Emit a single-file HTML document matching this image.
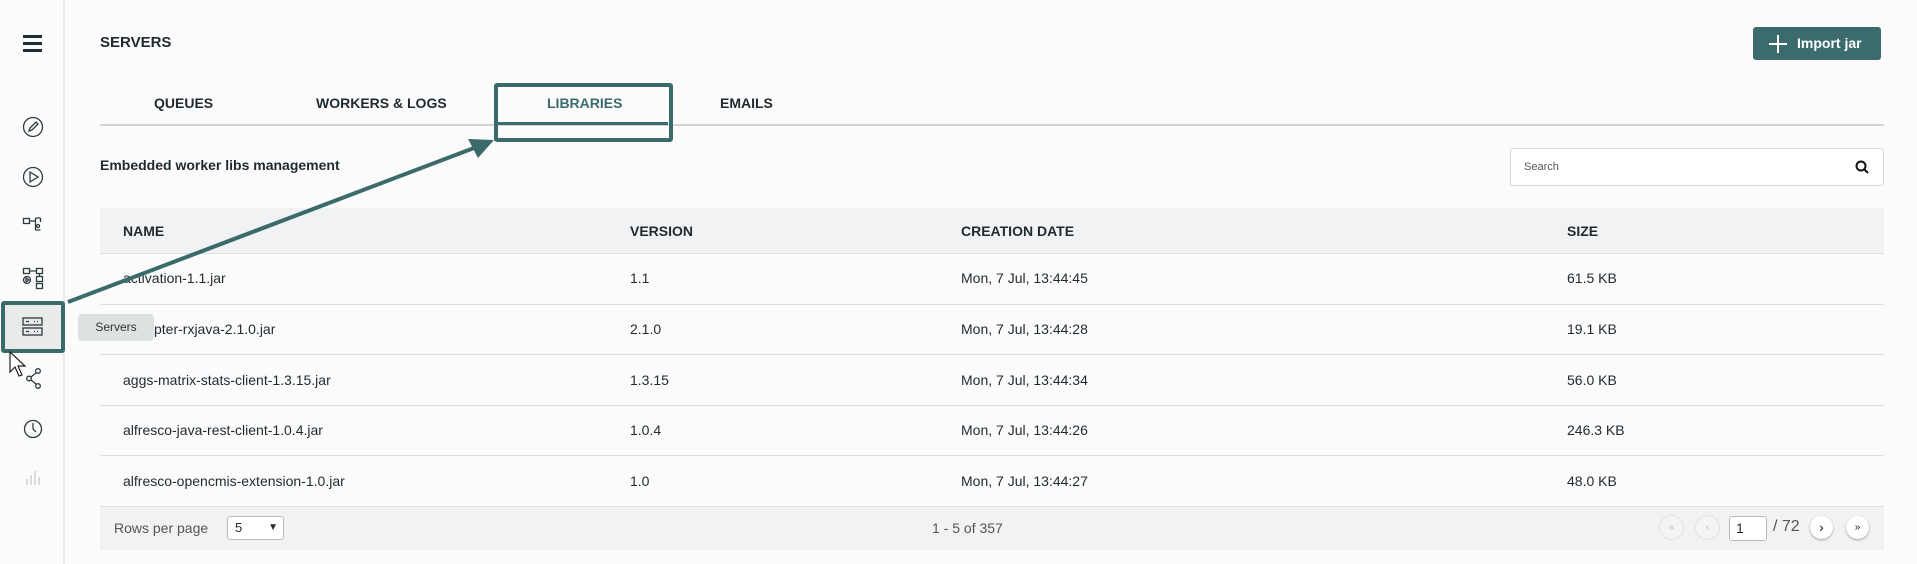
<!DOCTYPE html>
<html><head><meta charset="utf-8"><style>
*{margin:0;padding:0;box-sizing:border-box}
body{width:1917px;height:564px;background:#fcfbfb;font-family:"Liberation Sans",sans-serif;color:#1f2a30;position:relative;overflow:hidden}
.abs{position:absolute}
.side{left:0;top:0;width:65px;height:564px;border-right:2px solid #e9e9ea;background:#fcfbfb}
.t{position:absolute;white-space:nowrap}
.hdr{font-size:14px;font-weight:bold;color:#1f2a30}
.cell{font-size:14px;color:#1f2a30}
.row{position:absolute;left:100px;width:1784px;border-bottom:1px solid #dcdfe1}
.pb{position:absolute;top:516px;width:23px;height:23px;border-radius:50%;background:#fff;box-shadow:0 1px 2px rgba(0,0,0,.35);font-size:10px;text-align:center;line-height:23px;color:#222}
.pb.dis{background:#f3f4f5;color:#bbb;box-shadow:0 0 0 1px #e3e3e3}
</style></head><body>
<div class="abs side"></div>
<div class="abs" style="left:23px;top:35px;width:19px;height:3px;background:#1f3038"></div>
<div class="abs" style="left:23px;top:42px;width:19px;height:3px;background:#1f3038"></div>
<div class="abs" style="left:23px;top:49px;width:19px;height:3px;background:#1f3038"></div>
<svg class="abs" style="left:0;top:0" width="66" height="564" fill="none" stroke="#2d3a40" stroke-width="1.3">
<circle cx="33" cy="127" r="9.5"/><path d="M29 131l1-3 6-6 2 2-6 6z"/>
<circle cx="33" cy="177" r="9.5"/><path d="M30 172v10l8-5z"/>
<rect x="23.5" y="218.5" width="6" height="5"/><path d="M29.5 221h6M35.5 218v12M35.5 230h5M40.5 218v4M35.5 218h5"/><circle cx="38" cy="226" r="1.5"/>
<rect x="23.5" y="268.5" width="6" height="5"/><rect x="36.5" y="268.5" width="6" height="5"/><path d="M29.5 271h7M39.5 273.5v3"/><rect x="36.5" y="276.5" width="6" height="5"/><circle cx="27" cy="280" r="3.5"/><path d="M26 278v4l3-2z"/><rect x="36.5" y="283.5" width="6" height="5"/>
<path d="M31 377l5-4M31 380l5 4"/><circle cx="29" cy="378.5" r="2.3"/><circle cx="38" cy="371" r="2.3"/><circle cx="38" cy="386" r="2.3"/>
<circle cx="33" cy="429" r="8.5"/><path d="M33 423v6l3 3"/>
<path d="M27 485v-6M31 485v-10M35 485v-14M39 485v-8" stroke="#c8cccf"/>
</svg>
<div class="abs" style="left:1px;top:301px;width:64px;height:52px;border:4px solid #3b6a6a;border-radius:3px;background:#e9eaea"></div>
<svg class="abs" style="left:22px;top:317px" width="22" height="20" fill="none" stroke="#2d3a40" stroke-width="1.3"><rect x="1" y="1" width="19" height="7"/><rect x="1" y="11" width="19" height="7"/><path d="M4 4.5h3M12 4.5h1M15 4.5h1M4 14.5h3M12 14.5h1M15 14.5h1"/></svg>

<div class="t" style="left:100px;top:34px;font-size:15px;font-weight:bold">SERVERS</div>
<div class="abs" style="left:1753px;top:27px;width:128px;height:33px;background:#3b6b6c;border-radius:3px;color:#fff;font-size:14px;font-weight:bold;line-height:33px;padding-left:44px">Import jar</div>
<svg class="abs" style="left:1768px;top:34px" width="20" height="20" stroke="#fff" stroke-width="2"><path d="M10 1v18M1 10h18"/></svg>

<div class="t hdr" style="left:154px;top:95px">QUEUES</div>
<div class="t hdr" style="left:316px;top:95px">WORKERS &amp; LOGS</div>
<div class="t hdr" style="left:547px;top:95px;color:#3b6b6c">LIBRARIES</div>
<div class="t hdr" style="left:720px;top:95px">EMAILS</div>
<div class="abs" style="left:100px;top:124px;width:1784px;height:2px;background:#d4d4d4"></div>
<div class="abs" style="left:496px;top:122px;width:172px;height:3px;background:#3b6b6c"></div>
<div class="abs" style="left:494px;top:83px;width:179px;height:59px;border:4px solid #3b6a6a;border-radius:3px"></div>

<div class="t" style="left:100px;top:157px;font-size:14px;font-weight:bold">Embedded worker libs management</div>
<div class="abs" style="left:1510px;top:148px;width:374px;height:38px;border:1px solid #d8d8d8;border-radius:3px;background:#fff"></div>
<div class="t" style="left:1524px;top:161px;font-size:11px;color:#555">Search</div>
<svg class="abs" style="left:1855px;top:160px" width="14" height="14" fill="none" stroke="#111" stroke-width="2"><circle cx="6" cy="6" r="4.5"/><path d="M9 9l4 4"/></svg>

<div class="row" style="top:208px;height:46px;background:#f1f2f3"></div>
<div class="t hdr" style="left:123px;top:223px">NAME</div>
<div class="t hdr" style="left:630px;top:223px">VERSION</div>
<div class="t hdr" style="left:961px;top:223px">CREATION DATE</div>
<div class="t hdr" style="left:1567px;top:223px">SIZE</div>
<div class="row" style="top:254px;height:51px"></div>
<div class="row" style="top:305px;height:50px"></div>
<div class="row" style="top:355px;height:51px"></div>
<div class="row" style="top:406px;height:50px"></div>
<div class="t cell" style="left:123px;top:270px">activation-1.1.jar</div><div class="t cell" style="left:630px;top:270px">1.1</div><div class="t cell" style="left:961px;top:270px">Mon, 7 Jul, 13:44:45</div><div class="t cell" style="left:1567px;top:270px">61.5 KB</div>
<div class="t cell" style="left:154px;top:321px">pter-rxjava-2.1.0.jar</div><div class="t cell" style="left:630px;top:321px">2.1.0</div><div class="t cell" style="left:961px;top:321px">Mon, 7 Jul, 13:44:28</div><div class="t cell" style="left:1567px;top:321px">19.1 KB</div>
<div class="t cell" style="left:123px;top:372px">aggs-matrix-stats-client-1.3.15.jar</div><div class="t cell" style="left:630px;top:372px">1.3.15</div><div class="t cell" style="left:961px;top:372px">Mon, 7 Jul, 13:44:34</div><div class="t cell" style="left:1567px;top:372px">56.0 KB</div>
<div class="t cell" style="left:123px;top:422px">alfresco-java-rest-client-1.0.4.jar</div><div class="t cell" style="left:630px;top:422px">1.0.4</div><div class="t cell" style="left:961px;top:422px">Mon, 7 Jul, 13:44:26</div><div class="t cell" style="left:1567px;top:422px">246.3 KB</div>
<div class="t cell" style="left:123px;top:473px">alfresco-opencmis-extension-1.0.jar</div><div class="t cell" style="left:630px;top:473px">1.0</div><div class="t cell" style="left:961px;top:473px">Mon, 7 Jul, 13:44:27</div><div class="t cell" style="left:1567px;top:473px">48.0 KB</div>
<div class="abs" style="left:100px;top:506px;width:1784px;height:44px;background:#f1f2f3;border-top:1px solid #dcdfe1"></div>
<div class="t" style="left:114px;top:520px;font-size:14px;color:#555">Rows per page</div>
<div class="abs" style="left:227px;top:516px;width:57px;height:24px;border:1px solid #bbb;border-radius:3px;background:#fff;font-size:13px;line-height:22px;padding-left:7px">5<span style="position:absolute;right:5px;font-size:10px">&#9660;</span></div>
<div class="t" style="left:932px;top:520px;font-size:14px;color:#555">1 - 5 of 357</div>
<div class="pb dis" style="left:1660px">&#171;</div>
<div class="pb dis" style="left:1696px">&#8249;</div>
<div class="abs" style="left:1729px;top:516px;width:38px;height:25px;border:1px solid #bbb;border-radius:3px;background:#fff;font-size:14px;line-height:23px;padding-left:6px">1</div>
<div class="t" style="left:1773px;top:518px;font-size:16px;color:#555">/ 72</div>
<div class="pb" style="left:1810px;font-size:14px">&#8250;</div>
<div class="pb" style="left:1846px">&#187;</div>

<!-- arrow on top -->
<svg class="abs" style="left:0;top:0" width="700" height="400"><path d="M68 302L474 148" stroke="#3b6a6a" stroke-width="4"/><path d="M494 140L468 139L478 158z" fill="#3b6a6a"/></svg>
<div class="abs" style="left:78px;top:314px;width:76px;height:27px;background:#dde1e2;border-radius:4px;font-size:12px;line-height:27px;text-align:center;color:#333">Servers</div>
<svg class="abs" style="left:9px;top:351px" width="20" height="28"><path d="M1 1v20l5-5 4 9 3-1-4-9h7z" fill="#fff" stroke="#222" stroke-width="1.2"/></svg>
</body></html>
